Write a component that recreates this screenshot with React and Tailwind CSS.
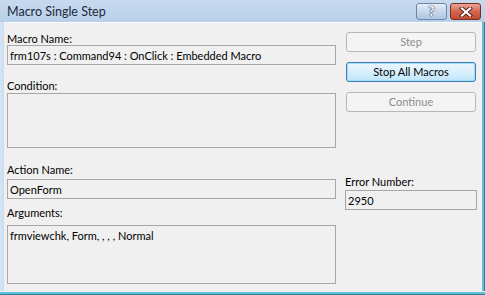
import React from 'react'

const font = { fontFamily: 'Lato, "Noto Sans", sans-serif' }

function Label({ children, className = '' }) {
  return <div className={`h-[13px] leading-[15px] text-[11px] text-[#000] whitespace-nowrap ${className}`}>{children}</div>
}

function Field({ children, className = '' }) {
  return (
    <div className={`border border-[#a5a7ab] bg-[#f0f0f0] pl-[2px] pt-[1px] text-[11px] text-[#000] leading-[17px] whitespace-nowrap overflow-hidden ${className}`}>
      {children}
    </div>
  )
}

function Btn({ children, active, className = '' }) {
  if (active) {
    return (
      <div className={`h-[20px] rounded-[3px] border border-[#3c7fb1] bg-gradient-to-b from-[#eaf6fd] via-[#d9f0fc] to-[#bee6fd] shadow-[inset_0_0_0_1px_#a9dcf6] flex items-center justify-center text-[11px] text-[#000] ${className}`}>
        {children}
      </div>
    )
  }
  return (
    <div className={`h-[20px] rounded-[3px] border border-[#b5b8bb] bg-[#f4f4f4] flex items-center justify-center text-[11px] text-[#8d8d8d] ${className}`}>
      {children}
    </div>
  )
}

export default function App() {
  return (
    <div className="w-[485px] h-[295px] flex flex-col bg-[#c9dcf0] overflow-hidden" style={font}>
      {/* title bar */}
      <div className="h-[22px] flex items-center justify-between bg-gradient-to-b from-[#c6d9ee] to-[#b9d0ea] pl-[7px] pr-[4px]">
        <span className="text-[12.5px] text-[#1b2a3c] leading-[13px] pt-[1px]">Macro Single Step</span>
        <div className="flex items-center gap-[3px] pt-[1px]">
          <div className="w-[31px] h-[17px] rounded-[3px] border border-[#6b86a6] bg-gradient-to-b from-[#e3edf8] via-[#c6d8ec] to-[#adc6e2] flex items-center justify-center">
            <span className="text-[13px] font-bold text-white leading-none [text-shadow:0_0_1px_#2e3f55,0_0_1px_#2e3f55,0_0_1px_#2e3f55]">?</span>
          </div>
          <div className="w-[31px] h-[17px] rounded-[3px] border border-[#7a2c20] bg-gradient-to-b from-[#e8a496] via-[#d4654f] to-[#c24a33] flex items-center justify-center">
            <svg width="14" height="10" viewBox="0 0 14 10">
              <path d="M3 1.5 L11 8.5 M11 1.5 L3 8.5" stroke="#5a1e14" strokeWidth="4" strokeLinecap="square" />
              <path d="M3 1.5 L11 8.5 M11 1.5 L3 8.5" stroke="#ffffff" strokeWidth="2.2" strokeLinecap="square" />
            </svg>
          </div>
        </div>
      </div>

      {/* body */}
      <div className="flex flex-1">
        <div className="w-[4px] bg-gradient-to-r from-[#d6e5f5] to-[#c9dcf0]" />
        <div className="flex-1 bg-[#f0f0f0] flex border-t border-[#fafbfd]">
          <div className="w-[329px] ml-[3px] pt-[8px] flex flex-col">
            <Label>Macro Name:</Label>
            <Field className="mt-[1px] h-[20px]">frm107s : Command94 : OnClick : Embedded Macro</Field>
            <Label className="mt-[13px]">Condition:</Label>
            <Field className="mt-[2px] h-[55px]" />
            <Label className="mt-[14px]">Action Name:</Label>
            <Field className="mt-[4px] h-[20px]">OpenForm</Field>
            <Label className="mt-[6px]">Arguments:</Label>
            <Field className="mt-[7px] h-[59px]">frmviewchk, Form, , , , Normal</Field>
          </div>
          <div className="w-[132px] ml-[9px] pt-[9px] flex flex-col">
            <Btn className="mx-[1px]">Step</Btn>
            <Btn active className="mx-[1px] mt-[10px]">Stop All Macros</Btn>
            <Btn className="mx-[1px] mt-[10px] h-[19px]">Continue</Btn>
            <Label className="mt-[62px]">Error Number:</Label>
            <Field className="mt-[3px] h-[20px]">2950</Field>
          </div>
        </div>
        <div className="w-[1px] bg-[#eef4fa]" />
        <div className="w-[2px] bg-[#63bfd6]" />
        <div className="w-[1px] bg-[#2f7f98]" />
      </div>

      {/* bottom frame */}
      <div className="h-[1px] bg-[#e9f3f9]" />
      <div className="h-[2px] bg-[#63bfd6]" />
      <div className="h-[1px] bg-[#2f7f98]" />
    </div>
  )
}
